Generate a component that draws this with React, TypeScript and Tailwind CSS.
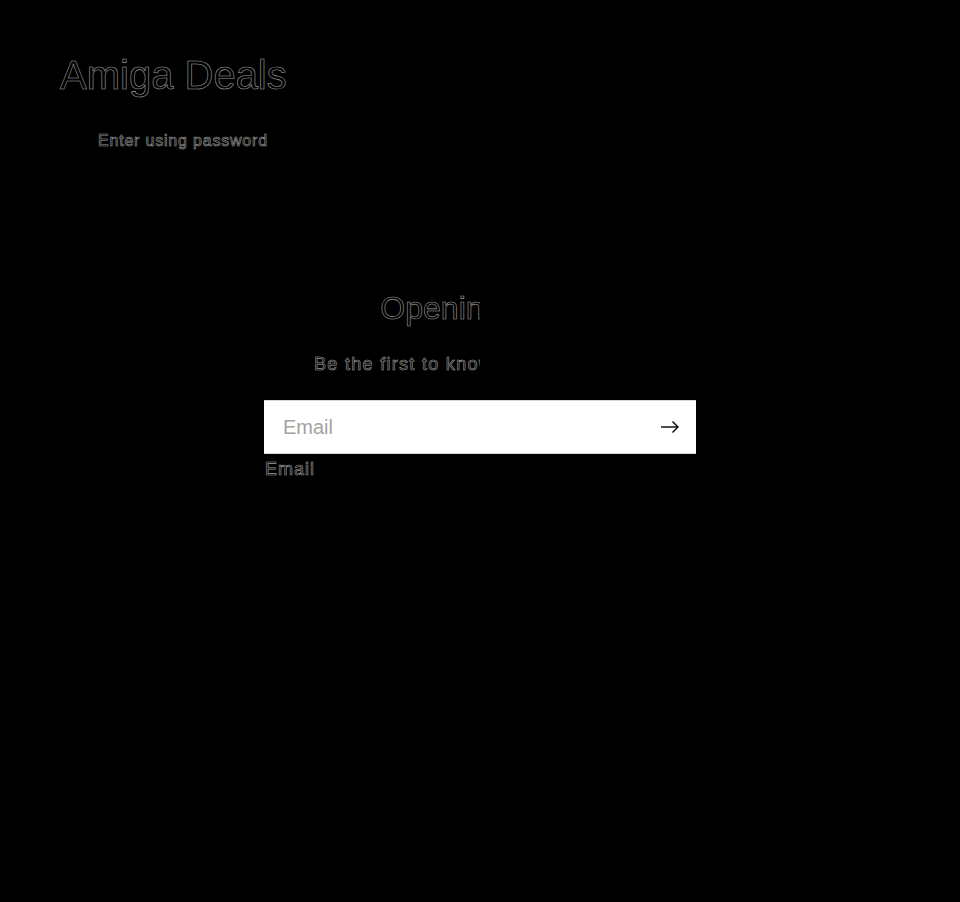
import React from "react";

const ghost =
  "text-black [-webkit-text-stroke:0.6px_rgba(255,255,255,0.6)]";

export default function App() {
  return (
    <div className="min-h-[902px] bg-black font-['Liberation_Sans',Arial,sans-serif]">
      {/* Header */}
      <header className="px-[60px] pt-[51px]">
        <h1 className={`text-[40px] leading-[48px] ${ghost}`}>Amiga Deals</h1>
        <p className={`mt-[31px] ml-[38px] text-[16px] leading-[22px] tracking-[0.8px] ${ghost}`}>
          Enter using password
        </p>
      </header>

      {/* Newsletter */}
      <main className="mt-[136px] flex flex-col items-center">
        <h2
          className={`text-[32px] leading-[40px] [clip-path:inset(0_50%_0_0)] ${ghost}`}
        >
          Opening soon
        </h2>
        <p
          className={`mt-[24px] w-[332px] whitespace-nowrap text-[18px] leading-[24px] tracking-[1.3px] [clip-path:inset(0_50%_0_0)] ${ghost}`}
        >
          Be the first to know when we launch.
        </p>

        <div className="mt-[24px] w-[432px]">
          <div className="flex h-[54px] items-center bg-white border-y border-gray-300">
            <input
              type="email"
              placeholder="Email"
              className="flex-1 bg-transparent pl-[19px] text-[20px] text-black placeholder:text-[#a3a3a3] outline-none"
            />
            <button className="mr-[11px] flex h-[30px] w-[30px] items-center justify-center text-black">
              <svg width="20" height="14" viewBox="0 0 20 14" fill="none" stroke="currentColor" strokeWidth="1.4">
                <path d="M1 7h17" />
                <path d="M12.5 1.5 18 7l-5.5 5.5" />
              </svg>
            </button>
          </div>
          <label className={`mt-[3px] block pl-[1px] text-[18px] leading-[24px] tracking-[1px] ${ghost}`}>
            Email
          </label>
        </div>
      </main>
    </div>
  );
}
